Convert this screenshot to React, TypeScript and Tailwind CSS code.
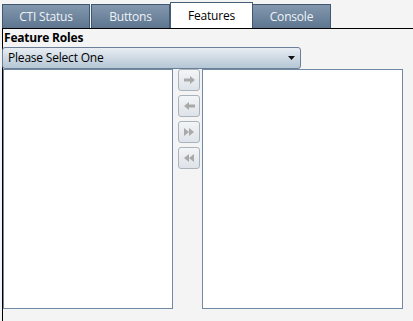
import React from "react";

const tabs = [
  { label: "CTI Status", w: "w-[88px]" },
  { label: "Buttons", w: "w-[79px]" },
  { label: "Features", w: "w-[83px]", active: true },
  { label: "Console", w: "w-[79px]" },
];

function RightArrow() {
  return (
    <svg width="11" height="8" viewBox="0 0 11 8">
      <path d="M0 2.5h6V0l5 4-5 4V5.5H0z" fill="#a9a9a9" />
    </svg>
  );
}

function LeftArrow() {
  return (
    <svg width="11" height="8" viewBox="0 0 11 8">
      <path d="M11 2.5H5V0L0 4l5 4V5.5h6z" fill="#a9a9a9" />
    </svg>
  );
}

function DoubleRight() {
  return (
    <svg width="10" height="8" viewBox="0 0 10 8">
      <path d="M0 0l5 4-5 4zM5 0l5 4-5 4z" fill="#a9a9a9" />
    </svg>
  );
}

function DoubleLeft() {
  return (
    <svg width="10" height="8" viewBox="0 0 10 8">
      <path d="M5 0L0 4l5 4zM10 0L5 4l5 4z" fill="#a9a9a9" />
    </svg>
  );
}

function MoveButton({ children }: { children: React.ReactNode }) {
  return (
    <button
      type="button"
      disabled
      className="w-[22px] h-[22px] flex items-center justify-center rounded-[3px] border border-[#aab3bc] bg-gradient-to-b from-[#f3f5f7] to-[#dde3e9]"
    >
      {children}
    </button>
  );
}

export default function App() {
  return (
    <div
      className="w-[413px] h-[321px] bg-[#f4f4f4] overflow-hidden flex flex-col text-[12px] tracking-[-0.2px]"
      style={{ fontFamily: '"Open Sans", "Noto Sans", sans-serif' }}
    >
      <div className="flex items-end h-[28px] pl-[2px]">
        {tabs.map((t) =>
          t.active ? (
            <div
              key={t.label}
              className={`${t.w} h-[26px] -mx-[1px] flex items-center justify-center bg-white border border-b-0 border-[#465d76] text-black`}
            >
              {t.label}
            </div>
          ) : (
            <div
              key={t.label}
              className={`${t.w} h-[24px] mr-[1px] flex items-center justify-center border border-b-0 border-[#3f5770] bg-gradient-to-b from-[#8398ae] to-[#5d758f] text-[#eef3f8]`}
            >
              {t.label}
            </div>
          )
        )}
      </div>

      <div className="flex-1 ml-[2px] border-l border-t border-black flex flex-col">
        <div className="h-[18px] pl-[1px] flex items-center font-bold text-black">
          Feature Roles
        </div>
        <div className="h-[22px] w-[299px] -ml-[1px] flex items-center justify-between pl-[5px] pr-[5px] rounded-[3px] border border-[#6b8098] bg-gradient-to-b from-[#e8edf2] to-[#b5c6d5] text-black">
          <span>Please Select One</span>
          <svg width="7" height="4" viewBox="0 0 7 4">
            <path d="M0 0h7L3.5 4z" fill="#111" />
          </svg>
        </div>
        <div className="flex h-[240px]">
          <div className="w-[170px] h-full bg-white border border-[#7189a3]" />
          <div className="ml-[5px] flex flex-col gap-[4px]">
            <MoveButton>
              <RightArrow />
            </MoveButton>
            <MoveButton>
              <LeftArrow />
            </MoveButton>
            <MoveButton>
              <DoubleRight />
            </MoveButton>
            <MoveButton>
              <DoubleLeft />
            </MoveButton>
          </div>
          <div className="ml-[2px] w-[201px] h-full bg-white border border-[#7189a3]" />
        </div>
      </div>
    </div>
  );
}
